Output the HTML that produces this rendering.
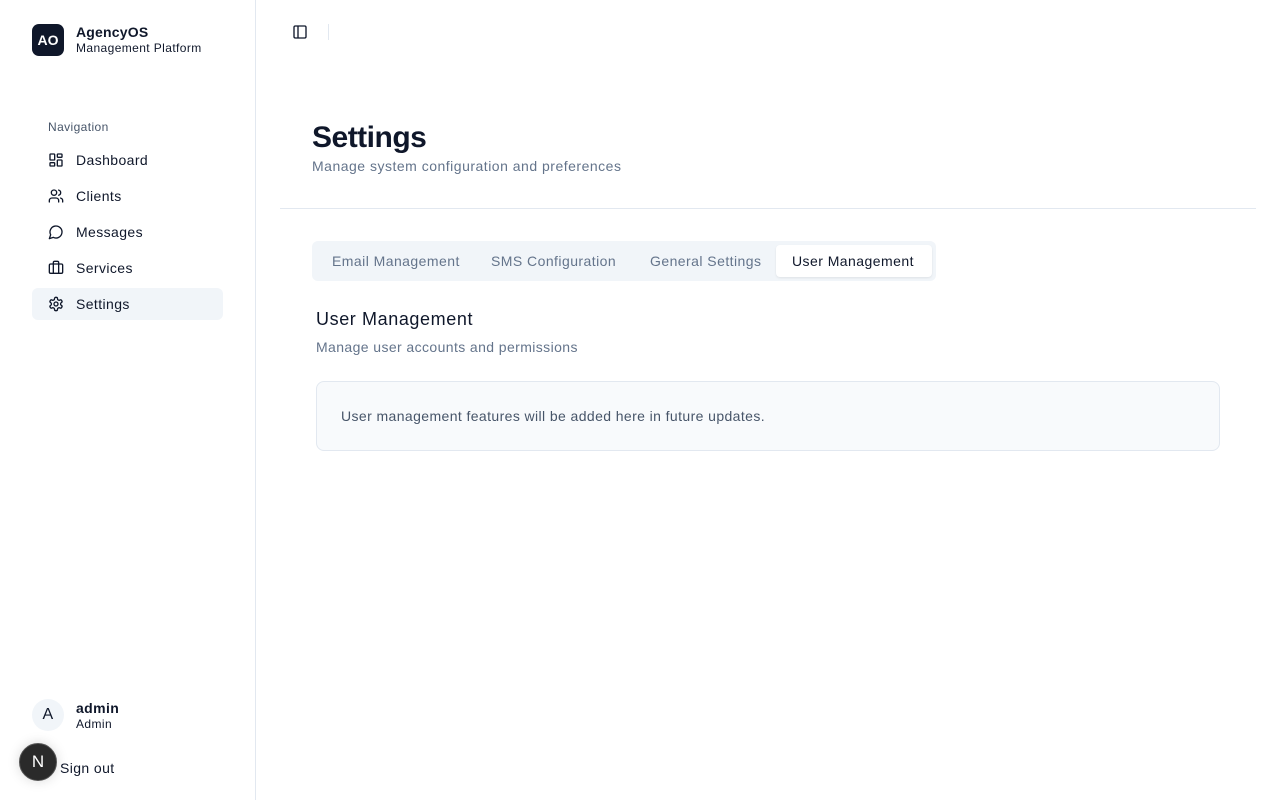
<!DOCTYPE html>
<html><head><meta charset="utf-8"><style>
*{box-sizing:border-box;margin:0;padding:0}
body{width:1280px;height:800px;font-family:"Liberation Sans",sans-serif;background:#fff;color:#0f172a;position:relative;overflow:hidden;letter-spacing:0.4px}
.sb{position:absolute;left:0;top:0;width:256px;height:800px;border-right:1px solid #e2e8f0;background:#fff}
.logo{position:absolute;left:32px;top:24px;width:32px;height:32px;border-radius:7px;background:#0f172a;color:#fff;font-weight:bold;font-size:14px;display:flex;align-items:center;justify-content:center;letter-spacing:0}
.t1{position:absolute;left:76px;top:24px;font-size:14px;font-weight:bold;letter-spacing:0.2px}
.t2{position:absolute;left:76px;top:41px;font-size:12px}
.navl{position:absolute;left:48px;top:120px;font-size:12px;color:#475569}
.it{position:absolute;left:32px;width:191px;height:32px;border-radius:6px;display:flex;align-items:center;padding-left:16px;font-size:14px;color:#0f172a}
.it svg{width:16px;height:16px;margin-right:12px;fill:none;stroke:#0f172a;stroke-width:2;stroke-linecap:round;stroke-linejoin:round}
.act{background:#f1f5f9}
.av{position:absolute;left:32px;top:699px;width:32px;height:32px;border-radius:50%;background:#f1f5f9;display:flex;align-items:center;justify-content:center;font-size:16px}
.nx{position:absolute;left:19px;top:743px;width:38px;height:38px;border-radius:50%;background:#2a2a2a;border:1px solid #555;color:#fff;font-size:17px;display:flex;align-items:center;justify-content:center;box-shadow:0 0 12px rgba(0,0,0,.15);letter-spacing:0}
</style></head><body>
<div class="sb">
<div class="logo">AO</div>
<div class="t1">AgencyOS</div>
<div class="t2">Management Platform</div>
<div class="navl">Navigation</div>
<div class="it" style="top:144px"><svg viewBox="0 0 24 24"><rect x="3" y="3" width="7" height="9" rx="1"/><rect x="14" y="3" width="7" height="5" rx="1"/><rect x="14" y="12" width="7" height="9" rx="1"/><rect x="3" y="16" width="7" height="5" rx="1"/></svg>Dashboard</div>
<div class="it" style="top:180px"><svg viewBox="0 0 24 24"><path d="M16 21v-2a4 4 0 0 0-4-4H6a4 4 0 0 0-4 4v2"/><circle cx="9" cy="7" r="4"/><path d="M22 21v-2a4 4 0 0 0-3-3.87M16 3.13a4 4 0 0 1 0 7.75"/></svg>Clients</div>
<div class="it" style="top:216px"><svg viewBox="0 0 24 24"><path d="M7.9 20A9 9 0 1 0 4 16.1L2 22Z"/></svg>Messages</div>
<div class="it" style="top:252px"><svg viewBox="0 0 24 24"><path d="M16 20V4a2 2 0 0 0-2-2h-4a2 2 0 0 0-2 2v16"/><rect x="2" y="6" width="20" height="14" rx="2"/></svg>Services</div>
<div class="it act" style="top:288px"><svg viewBox="0 0 24 24"><path d="M12.22 2h-.44a2 2 0 0 0-2 2v.18a2 2 0 0 1-1 1.73l-.43.25a2 2 0 0 1-2 0l-.15-.08a2 2 0 0 0-2.73.73l-.22.38a2 2 0 0 0 .73 2.730l.15.1a2 2 0 0 1 1 1.72v.51a2 2 0 0 1-1 1.74l-.15.09a2 2 0 0 0-.73 2.73l.22.38a2 2 0 0 0 2.730.73l.15-.08a2 2 0 0 1 2 0l.43.25a2 2 0 0 1 1 1.73V20a2 2 0 0 0 2 2h.44a2 2 0 0 0 2-2v-.18a2 2 0 0 1 1-1.73l.43-.25a2 2 0 0 1 2 0l.15.08a2 2 0 0 0 2.73-.73l.22-.39a2 2 0 0 0-.73-2.73l-.15-.08a2 2 0 0 1-1-1.74v-.5a2 2 0 0 1 1-1.74l.15-.09a2 2 0 0 0 .73-2.73l-.22-.38a2 2 0 0 0-2.73-.73l-.15.08a2 2 0 0 1-2 0l-.43-.25a2 2 0 0 1-1-1.73V4a2 2 0 0 0-2-2z"/><circle cx="12" cy="12" r="3"/></svg>Settings</div>
<div class="av">A</div>
<div style="position:absolute;left:76px;top:700px;font-size:14px;font-weight:bold">admin</div>
<div style="position:absolute;left:76px;top:717px;font-size:12px">Admin</div>
<div style="position:absolute;left:60px;top:760px;font-size:14px">Sign out</div>
<div class="nx">N</div>
</div>
<svg style="position:absolute;left:292px;top:24px" width="16" height="16" viewBox="0 0 24 24" fill="none" stroke="#0f172a" stroke-width="2"><rect x="3" y="3" width="18" height="18" rx="2"/><path d="M9 3v18"/></svg>
<div style="position:absolute;left:328px;top:24px;width:1px;height:16px;background:#e2e8f0"></div>
<div style="position:absolute;left:312px;top:121px;font-size:30px;font-weight:bold;letter-spacing:-0.5px">Settings</div>
<div style="position:absolute;left:312px;top:158px;font-size:14px;color:#64748b;letter-spacing:0.5px">Manage system configuration and preferences</div>
<div style="position:absolute;left:280px;top:208px;width:976px;height:1px;background:#e2e8f0"></div>
<div style="position:absolute;left:312px;top:241px;width:624px;height:40px;background:#f1f5f9;border-radius:6px;font-size:14px;color:#64748b;letter-spacing:0.45px">
<span style="position:absolute;left:20px;top:12px">Email Management</span>
<span style="position:absolute;left:179px;top:12px">SMS Configuration</span>
<span style="position:absolute;left:338px;top:12px">General Settings</span>
<div style="position:absolute;left:464px;top:4px;width:156px;height:32px;background:#fff;border-radius:4px;box-shadow:0 1px 2px rgba(0,0,0,.08);color:#0f172a;padding:8px 0 0 16px">User Management</div>
</div>
<div style="position:absolute;left:316px;top:309px;font-size:18px;letter-spacing:0.6px">User Management</div>
<div style="position:absolute;left:316px;top:339px;font-size:14px;color:#64748b">Manage user accounts and permissions</div>
<div style="position:absolute;left:316px;top:381px;width:904px;height:70px;border:1px solid #e2e8f0;border-radius:8px;background:#f8fafc;font-size:14px;color:#475569;padding:26px 0 0 24px">User management features will be added here in future updates.</div>
</body></html>
